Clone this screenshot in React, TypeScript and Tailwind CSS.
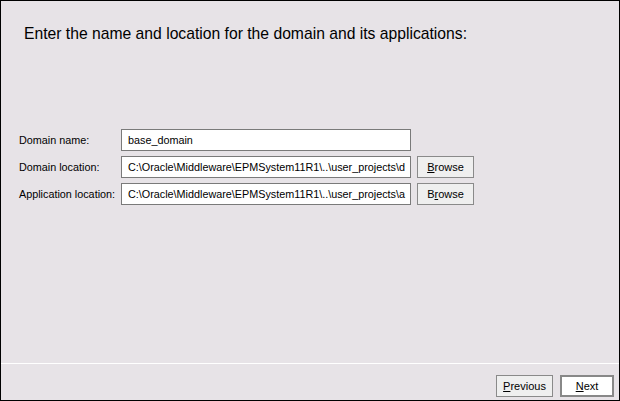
import React from 'react';

const FONT = { fontFamily: '"Liberation Sans", Arial, sans-serif' };

const Field: React.FC<{ label: string; value: string; browse?: React.ReactNode }> = ({ label, value, browse }) => (
  <div className="flex items-center h-[22px]">
    <div className="w-[102px] text-[10.8px] text-black">{label}</div>
    <div className="w-[290px] h-[22px] border border-[#7a7a7a] bg-white pl-[6px] text-[10.8px] text-black leading-[20px] overflow-hidden whitespace-nowrap">
      {value}
    </div>
    {browse && (
      <button className="ml-[6px] w-[57px] h-[22px] border border-[#8a8a8a] bg-[#efefef] text-[11px] text-black leading-[20px]">
        {browse}
      </button>
    )}
  </div>
);

const App: React.FC = () => {
  return (
    <div className="w-[620px] h-[401px] bg-[#e7e3e7] border border-black flex flex-col" style={FONT}>
      <div className="pt-[24px] pl-[23px]">
        <h1 className="text-[15.7px] leading-[18px] text-black">
          Enter the name and location for the domain and its applications:
        </h1>
      </div>

      <div className="mt-[86px] pl-[18px] flex flex-col gap-[5px]">
        <Field label="Domain name:" value="base_domain" />
        <Field
          label="Domain location:"
          value="C:\Oracle\Middleware\EPMSystem11R1\..\user_projects\d"
          browse={<><span className="underline">B</span>rowse</>}
        />
        <Field
          label="Application location:"
          value="C:\Oracle\Middleware\EPMSystem11R1\..\user_projects\a"
          browse={<>B<span className="underline">r</span>owse</>}
        />
      </div>

      <div className="flex-1" />

      <div className="h-px bg-white" />
      <div className="h-[36px] flex justify-end items-start pt-[11px] pr-[5px] gap-[7px]">
        <button className="w-[57px] h-[22px] border border-[#8a8a8a] bg-[#efefef] text-[11px] text-black leading-[20px]">
          <span className="underline">P</span>revious
        </button>
        <button className="w-[54px] h-[22px] border-2 border-[#888888] bg-white text-[11px] text-black leading-[18px]">
          <span className="underline">N</span>ext
        </button>
      </div>
    </div>
  );
};

export default App;
